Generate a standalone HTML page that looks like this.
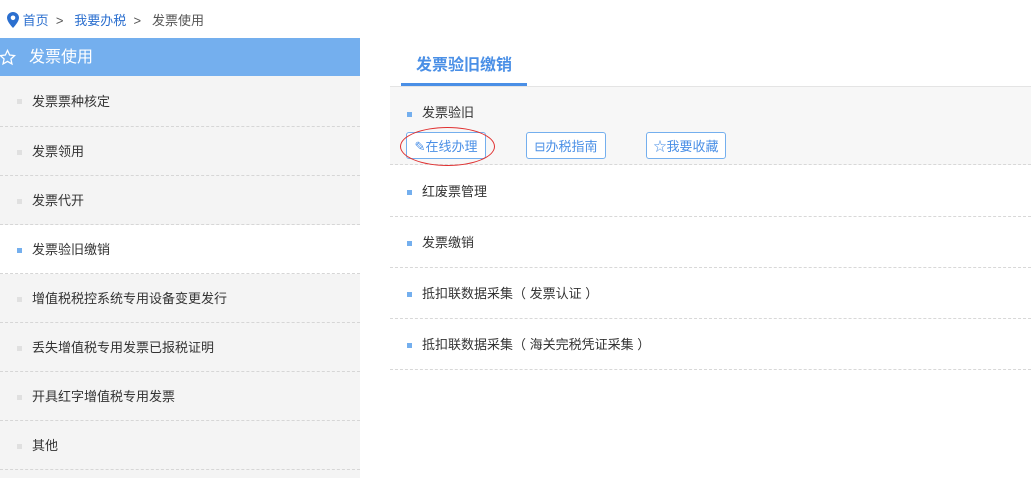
<!DOCTYPE html>
<html><head><meta charset="utf-8"><style>
*{margin:0;padding:0;box-sizing:border-box}
body{width:1031px;height:473px;background:#fff;font-family:"Liberation Sans","Noto Sans CJK SC",sans-serif;font-size:13px;color:#333;position:relative;overflow:hidden}
.abs{position:absolute}
.bc{left:7px;top:10px;font-size:13px;color:#555;white-space:nowrap}
.bc a{color:#2b6fcf;text-decoration:none}
.side{left:0;top:38px;width:360px;height:440px;background:#f4f4f4}
.sh{height:38px;background:#74afee;color:#fff;font-size:16px;line-height:40px;padding-left:29px;position:relative}
.si{height:49px;border-bottom:1px dashed #d6d6d6;line-height:50px;padding-left:32px;position:relative;color:#333}
.si:before{content:"";position:absolute;left:17px;top:23px;width:5px;height:5px;background:#e0e0e0}
.si.act{background:#fff}
.si.act:before{background:#74afee}
.tab{left:416px;top:51px;font-size:16px;font-weight:bold;color:#4a8fe6}
.ul{left:401px;top:83px;width:126px;height:3px;background:#4a8fe6}
.gl{left:390px;top:86px;width:641px;height:1px;background:#e4e4e4}
.g1{left:390px;top:87px;width:641px;height:78px;background:#f7f7f7;border-bottom:1px dashed #d8d8d8}
.ri{left:390px;width:641px;height:51px;border-bottom:1px dashed #d8d8d8;padding-left:32px;line-height:52px}
.ri:before,.g1 .t:before{content:"";position:absolute;left:17px;top:24px;width:5px;height:5px;background:#74afee}
.btn{position:absolute;top:45px;height:27px;width:80px;border:1px solid #74afee;border-radius:3px;color:#4a8fe6;font-size:13px;line-height:27px;text-align:center;background:#fff}
</style></head><body>
<div class="abs bc"><svg width="12" height="16" viewBox="0 0 12 16" style="vertical-align:-3px"><path d="M6 0C2.7 0 0 2.6 0 5.8 0 10 6 16 6 16s6-6 6-10.2C12 2.6 9.3 0 6 0z" fill="#2b6fcf"/><circle cx="6" cy="5.8" r="2.3" fill="#fff"/></svg> <a>首页</a> &nbsp;&gt;&nbsp;&nbsp; <a>我要办税</a> &nbsp;&gt;&nbsp;&nbsp; 发票使用</div>
<div class="abs side">
<div class="sh"><svg class="abs" style="left:-1px;top:11px" width="17" height="17" viewBox="0 0 24 24"><path d="M12 2l3 6.5 7 .8-5.2 4.8 1.5 7L12 17.5 5.7 21l1.5-7L2 9.3l7-.8z" fill="none" stroke="#fff" stroke-width="1.8"/></svg>发票使用</div>
<div class="si" style="height:51px;line-height:52px">发票票种核定</div>
<div class="si">发票领用</div>
<div class="si">发票代开</div>
<div class="si act">发票验旧缴销</div>
<div class="si">增值税税控系统专用设备变更发行</div>
<div class="si">丢失增值税专用发票已报税证明</div>
<div class="si">开具红字增值税专用发票</div>
<div class="si">其他</div>
</div>
<div class="abs tab">发票验旧缴销</div>
<div class="abs gl"></div>
<div class="abs ul"></div>
<div class="abs g1">
<div class="t" style="position:absolute;left:0;top:1px;padding-left:32px;line-height:50px;height:50px;width:200px">发票验旧</div>
<div class="btn" style="left:16px">✎在线办理</div>
<div class="btn" style="left:136px">⊟办税指南</div>
<div class="btn" style="left:256px">☆我要收藏</div>
<div style="position:absolute;left:10px;top:40px;width:95px;height:39px;border:1px solid #e03030;border-radius:50%"></div>
</div>
<div class="abs ri" style="top:166px">红废票管理</div>
<div class="abs ri" style="top:217px">发票缴销</div>
<div class="abs ri" style="top:268px">抵扣联数据采集（ 发票认证 ）</div>
<div class="abs ri" style="top:319px">抵扣联数据采集（ 海关完税凭证采集 ）</div>
</body></html>
